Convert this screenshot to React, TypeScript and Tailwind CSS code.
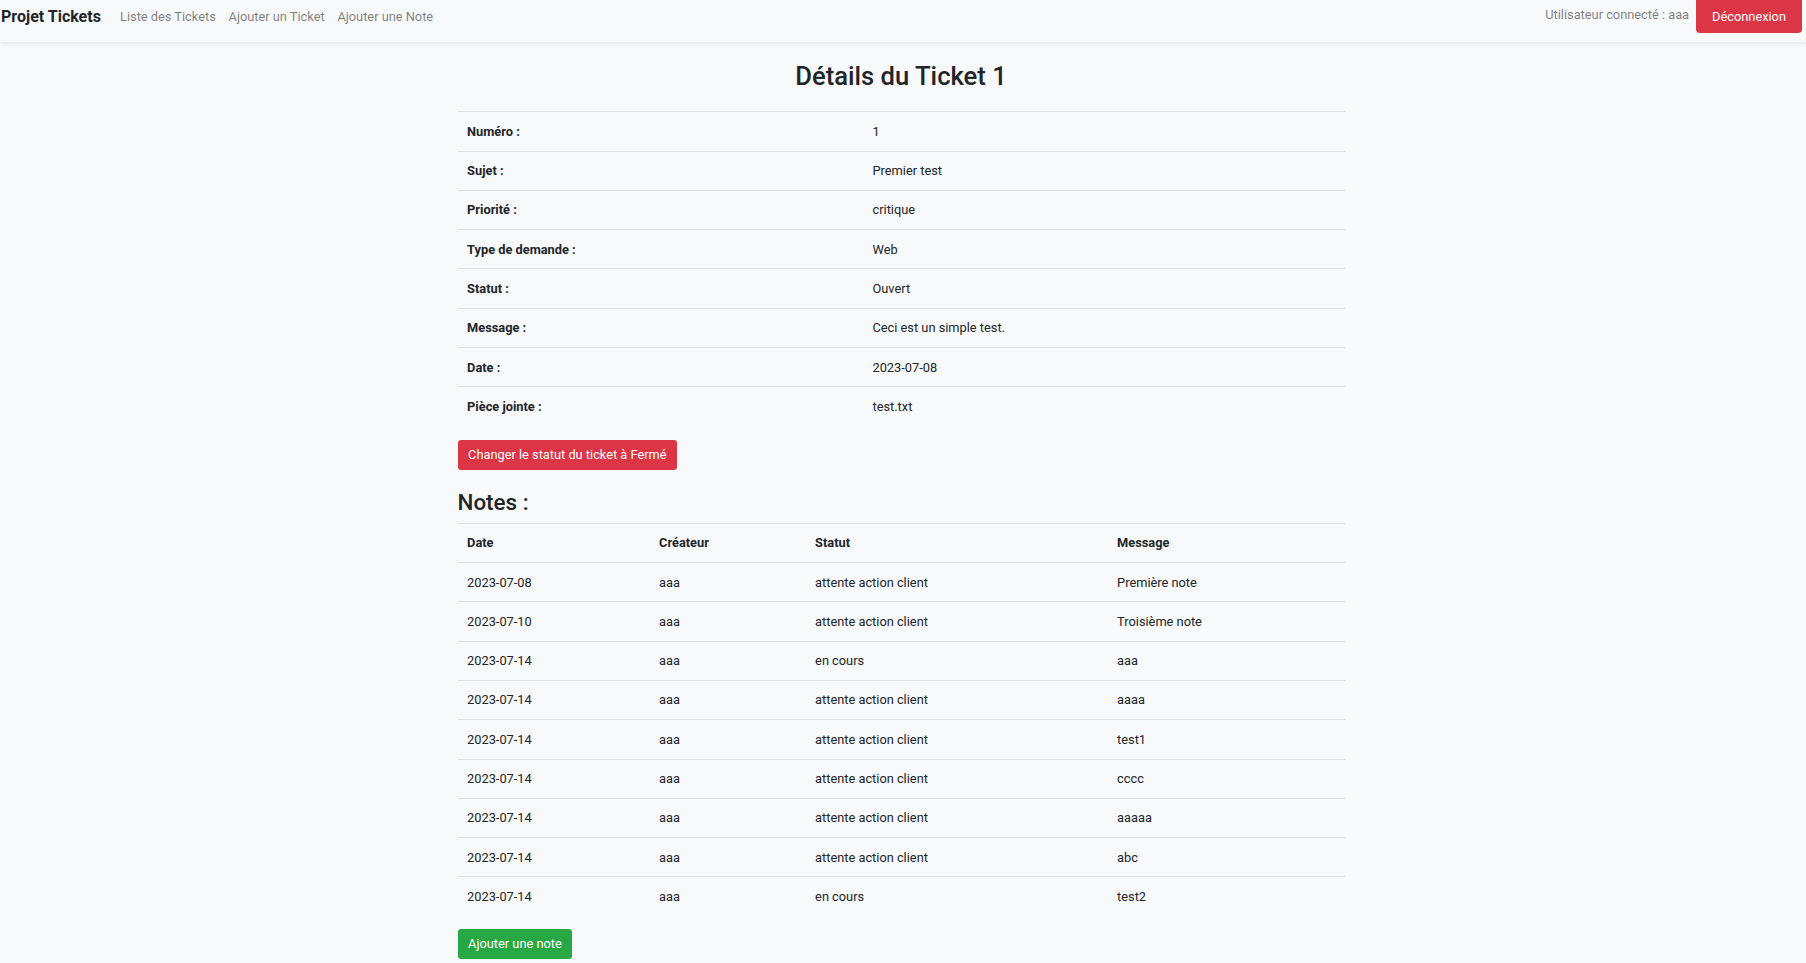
import React from "react";

const details = [
    { label: "Numéro :", value: "1" },
    { label: "Sujet :", value: "Premier test" },
    { label: "Priorité :", value: "critique" },
    { label: "Type de demande :", value: "Web" },
    { label: "Statut :", value: "Ouvert" },
    { label: "Message :", value: "Ceci est un simple test." },
    { label: "Date :", value: "2023-07-08" },
    { label: "Pièce jointe :", value: "test.txt" },
];

const notes = [
    { date: "2023-07-08", createur: "aaa", statut: "attente action client", message: "Première note" },
    { date: "2023-07-10", createur: "aaa", statut: "attente action client", message: "Troisième note" },
    { date: "2023-07-14", createur: "aaa", statut: "en cours", message: "aaa" },
    { date: "2023-07-14", createur: "aaa", statut: "attente action client", message: "aaaa" },
    { date: "2023-07-14", createur: "aaa", statut: "attente action client", message: "test1" },
    { date: "2023-07-14", createur: "aaa", statut: "attente action client", message: "cccc" },
    { date: "2023-07-14", createur: "aaa", statut: "attente action client", message: "aaaaa" },
    { date: "2023-07-14", createur: "aaa", statut: "attente action client", message: "abc" },
    { date: "2023-07-14", createur: "aaa", statut: "en cours", message: "test2" },
];

function Navbar() {
    return (
        <div className="h-[42px] bg-[#f8f9fa] shadow-[0_2px_4px_rgba(0,0,0,0.075)] relative z-10">
            <div className="h-[33px] flex items-center justify-between pr-[4px]">
                <div className="flex items-center">
                    <span className="text-[16px] font-bold text-[#212529] pl-[1px] mr-[12.8px] leading-[24px]">
                        Projet Tickets
                    </span>
                    <span className="text-[12.8px] text-[rgba(0,0,0,0.5)] px-[6.4px] leading-[19.2px]">Liste des Tickets</span>
                    <span className="text-[12.8px] text-[rgba(0,0,0,0.5)] px-[6.4px] leading-[19.2px]">Ajouter un Ticket</span>
                    <span className="text-[12.8px] text-[rgba(0,0,0,0.5)] px-[6.4px] leading-[19.2px]">Ajouter une Note</span>
                </div>
                <div className="flex items-center gap-[7px]">
                    <span className="text-[12.8px] text-[rgba(0,0,0,0.5)] leading-[19.2px] -mt-[3px]">
                        Utilisateur connecté : aaa
                    </span>
                    <button className="h-[33px] px-[16px] bg-[#dc3545] text-white text-[12.8px] rounded-b-[4px] leading-[19.2px]">
                        Déconnexion
                    </button>
                </div>
            </div>
        </div>
    );
}

export default function App() {
    return (
        <div className="min-h-[963px] bg-[#f8f9fa] font-['Roboto',sans-serif] text-[#212529]">
            <Navbar />
            <div className="pr-[4px]">
                <div className="w-[887px] mx-auto">
                    <h2 className="text-[25.6px] font-medium leading-[1.2] text-center mt-[19px] mb-[19.5px]">
                        Détails du Ticket 1
                    </h2>
                    <div className="text-[12.8px] leading-[19.2px]">
                        {details.map((d) => (
                            <div key={d.label} className="flex border-t border-[#dee2e6]">
                                <div className="w-[405.4px] px-[9.6px] py-[9.55px] font-bold">{d.label}</div>
                                <div className="flex-1 px-[9.6px] py-[9.55px]">{d.value}</div>
                            </div>
                        ))}
                    </div>
                    <button className="mt-[14px] h-[30.4px] px-[10.6px] bg-[#dc3545] text-white text-[12.8px] rounded-[3.2px]">
                        Changer le statut du ticket à Fermé
                    </button>
                    <h3 className="text-[22.4px] font-medium leading-[1.2] mt-[19.5px] mb-[6.4px]">Notes :</h3>
                    <div className="text-[12.8px] leading-[19.2px]">
                        <div className="flex border-t border-[#dee2e6] font-bold">
                            <div className="w-[192px] px-[9.6px] py-[9.55px]">Date</div>
                            <div className="w-[156px] px-[9.6px] py-[9.55px]">Créateur</div>
                            <div className="w-[302px] px-[9.6px] py-[9.55px]">Statut</div>
                            <div className="flex-1 px-[9.6px] py-[9.55px]">Message</div>
                        </div>
                        {notes.map((n, i) => (
                            <div key={i} className="flex border-t border-[#dee2e6]">
                                <div className="w-[192px] px-[9.6px] py-[9.55px]">{n.date}</div>
                                <div className="w-[156px] px-[9.6px] py-[9.55px]">{n.createur}</div>
                                <div className="w-[302px] px-[9.6px] py-[9.55px]">{n.statut}</div>
                                <div className="flex-1 px-[9.6px] py-[9.55px]">{n.message}</div>
                            </div>
                        ))}
                    </div>
                    <button className="mt-[13px] h-[30.4px] px-[10.6px] bg-[#28a745] text-white text-[12.8px] rounded-[3.2px]">
                        Ajouter une note
                    </button>
                </div>
            </div>
        </div>
    );
}
